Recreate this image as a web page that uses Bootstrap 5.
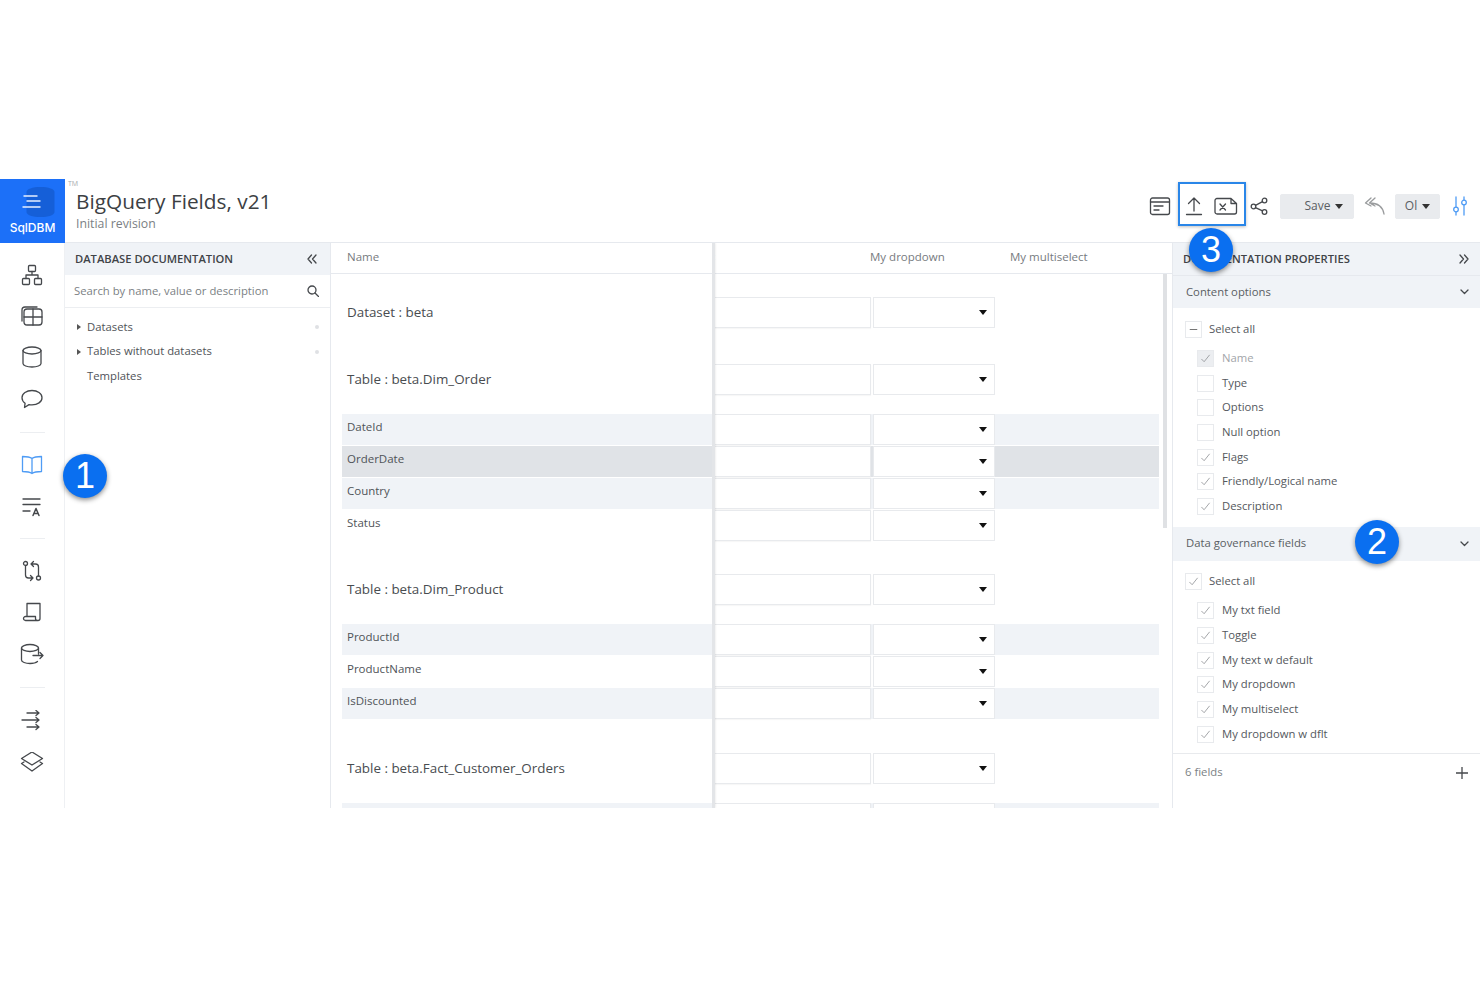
<!DOCTYPE html>
<html lang="en">
<head>
    <meta charset="UTF-8">
    <meta name="viewport" content="width=device-width, initial-scale=1.0">
    <title>SqlDBM - BigQuery Fields</title>
    <link href="https://cdn.jsdelivr.net/npm/bootstrap@5.3.0/dist/css/bootstrap.min.css" rel="stylesheet">
    <style>
        html, body { height: 100%; }
        body { font-family: "Open Sans", "Liberation Sans", sans-serif; background: #fff; color: #4a4f55; font-size: 12px; overflow: hidden; }
        .page-top { height: 179px; }
        .app-shell { height: 629px; position: relative; overflow: hidden; }
        svg { display: block; }
        .ico { fill: none; stroke: #45484c; stroke-width: 1.3; stroke-linecap: round; stroke-linejoin: round; }
        .ico-blue { stroke: #4f9cf5; }

        .top-bar { height: 64px; border-bottom: 1px solid #e6e9ee; }
        .logo-box { width: 65px; height: 64px; background: #1c70f8; color: #fff; font-family: Inter, sans-serif; font-size: 12px; font-weight: 500; }
        .logo-box svg { margin-top: 7px; }
        .logo-box span { line-height: 16px; }
        .tm-mark { font-size: 7px; color: #a6a9ad; margin: 1px 0 0 3px; line-height: 8px; width: 8px; }
        .doc-title { font-size: 20.8px; line-height: 28px; color: #3c4043; margin: 8px 0 0 0; font-weight: 400; }
        .doc-sub { font-size: 12.3px; line-height: 17px; color: #7b7f84; }
        .tool-zone { padding: 0 12px 9px 0; }
        .tool-ico { width: 33px; display: flex; justify-content: center; flex: none; }
        .form-ico { width: 36px; }
        .share-ico { width: 26px; }
        .export-box { border: 2px solid #2a86e8; width: 68px; height: 44px; box-shadow: 0 1px 3px rgba(0,0,0,.25); margin-bottom: 4px; padding-top: 4px; }
        .upload-ico { width: 27px; }
        .xfile-ico { width: 37px; }
        .gray-btn { --bs-btn-bg: #e9ebee; --bs-btn-border-color: #e9ebee; --bs-btn-color: #5a5e63; --bs-btn-font-size: 12px; --bs-btn-padding-y: 0; --bs-btn-padding-x: 0; --bs-btn-border-radius: 2px; height: 25px; }
        .save-btn { width: 74px; padding-left: 14px; margin: 0 10px 0 8px; }
        .user-btn { width: 45px; margin: 0 12px 0 10px; }
        .gray-btn.dropdown-toggle::after { border-top: 5px solid #333; border-left-width: 4.5px; border-right-width: 4.5px; margin-left: 5px; vertical-align: 1px; }

        .work-area { height: 565px; }
        .icon-rail { width: 65px; border-right: 1px solid #eef0f3; padding-top: 11px; }
        .rail-cell { height: 41.4px; }
        .rail-rule { width: 25px; height: 1px; background: #eceef1; margin: 12px 0; }
        .rail-rule.rule-tight { margin: 11px 0; }
        .rail-rule.rule-wide { margin: 12.500px 0; }

        .left-panel { width: 266px; border-right: 1px solid #e6e9ee; }
        .panel-head { height: 32px; background: #f0f3f7; font-size: 11.2px; font-weight: 600; color: #3f4347; padding: 0 11px 0 10px; }
        .left-panel .panel-head { padding-right: 13px; }
        .search-row { height: 33px; border-bottom: 1px solid #eceef1; padding: 0 11px 0 9px; color: #7b7f84; font-size: 11.3px; }
        .tree-list { padding-top: 7px; }
        .tree-item { height: 24.6px; font-size: 11.3px; color: #4f5358; padding: 0 11px 0 12px; }
        .tree-arrow { width: 0; height: 0; border-left: 4px solid #555; border-top: 3px solid transparent; border-bottom: 3px solid transparent; margin-right: 6px; }
        .tree-name { margin-left: 10px; }
        .tree-arrow + .tree-name { margin-left: 0; }
        .tree-dot { width: 4px; height: 4px; border-radius: 50%; background: #dfe1e4; margin-left: auto; }

        .main-panel { width: 842px; border-right: 1px solid #e6e9ee; position: relative; padding: 0 13px 0 11px; overflow: hidden; }
        .col-heads { height: 31px; margin: 0 -13px 0 -11px; padding: 0 13px 2px 11px; border-bottom: 1px solid #e6e9ee; color: #777b80; font-size: 11.5px; }
        .name-cell { width: 370px; padding-left: 5px; flex: none; }
        .input-cell { width: 159px; flex: none; padding-left: 2px; }
        .drop-cell { width: 124px; flex: none; padding-left: 2px; }
        .multi-cell { padding-left: 18px; }
        .col-tick { color: #c9d4e0; width: 156px; flex: none; font-size: 9px; padding-left: 1px; }
        .row-list { padding-top: 23px; }
        .doc-line { height: 31px; margin-bottom: 1px; }
        .doc-line.is-title { margin-bottom: 0; }
        .is-title { margin-top: 33px; font-size: 13.4px; color: #484c50; }
        .is-title + .is-title { margin-top: 36px; }
        .is-title:first-child { margin-top: 0; }
        .is-title.is-later { margin-top: 34px; }
        .is-title + .is-field { margin-top: 19px; }
        .is-field { background: #f0f3f7; font-size: 11.5px; color: #4f5358; }
        .is-plain { background: #fff; }
        .is-picked { background: #e0e3e7; }
        .is-field .name-cell { padding-bottom: 6px; }
        .cell-box.form-control { height: 31px; border: 1px solid #e8eaed; border-radius: 0; background: #fff; box-shadow: 0 1px 1px rgba(0,0,0,.03); padding: 0; }
        .cell-drop { height: 31px; border: 1px solid #e8eaed; background: #fff; padding-right: 7px; }
        .cell-caret { width: 0; height: 0; border-top: 5px solid #111; border-left: 4px solid transparent; border-right: 4px solid transparent; }
        .freeze-edge { position: absolute; left: 381px; top: 0; bottom: 0; width: 3px; background: #e3e5e8; box-shadow: 1px 0 2px rgba(0,0,0,.06); }
        .scroll-thumb { position: absolute; right: 5px; top: 31px; width: 4px; height: 254px; background: #dfe1e4; }

        .right-panel { width: 307px; }
        .opt-band { height: 34px; background: #f0f3f7; color: #5a5e63; font-size: 11.3px; padding: 0 11px 0 13px; }
        .opt-band.first-band { height: 33px; border-top: 1px solid #e6e9ee; margin-bottom: 7px; }
        .opt-row { height: 24.7px; font-size: 11.3px; color: #54585d; padding-left: 24px; }
        .opt-row.opt-all { height: 29px; padding-left: 12px; margin-bottom: 2px; }
        .opt-row.is-muted { color: #a2a5a9; }
        .opt-row .form-check-input { width: 17px; height: 17px; margin: 0 8px 0 0; border: 1px solid #e8eaed; border-radius: 0; background-color: #fff; flex: none; }
        .opt-all .form-check-input { margin-right: 7px; }
        .opt-row .form-check-input:checked { background-color: #fff; border-color: #e8eaed; background-size: 11px; background-image: url("data:image/svg+xml,%3csvg xmlns='http://www.w3.org/2000/svg' viewBox='0 0 12 12'%3e%3cpath fill='none' stroke='%23909397' stroke-width='.9' d='M1.500 6.500l3 3 6-7.500'/%3e%3c/svg%3e"); }
        .opt-row .form-check-input.is-locked:checked { background-color: #eceef1; }
        .opt-row .form-check-input.is-part { background-size: 9px; background-image: url("data:image/svg+xml,%3csvg xmlns='http://www.w3.org/2000/svg' viewBox='0 0 12 12'%3e%3cpath stroke='%23666' stroke-width='1.2' d='M1 6h10'/%3e%3c/svg%3e"); }
        .sec-gap { height: 8px; }
        .gov-list { padding-top: 6.500px; }
        .fields-foot { height: 38px; margin-top: 7px; border-top: 1px solid #e8eaed; padding: 0 12px 0 12px; color: #7b7f84; font-size: 11.3px; }

        .step-badge { position: absolute; width: 44px; height: 44px; border-radius: 50%; background: #0a6ff0; color: #fff; font-family: "Liberation Sans", sans-serif; font-size: 36px; line-height: 44px; text-align: center; box-shadow: 0 2px 5px rgba(0,0,0,.45); }
        .step-one { left: 63px; top: 275px; }
        .step-two { left: 1355px; top: 341px; }
        .step-three { left: 1189px; top: 49px; }
    </style>
</head>
<body>
    <div class="page-top"></div>
    <div class="app-shell">
        <!-- top bar -->
        <div class="top-bar d-flex">
            <div class="logo-box d-flex flex-column align-items-center">
                <svg width="48" height="34" viewBox="0 0 48 34">
                    <path d="M17.500 6c0-3 6-5 14-5s14 2 14 5v20c0 3-6 5-14 5s-14-2-14-5z" fill="#155fd8"/>
                    <path d="M14.500 10h14M17.500 15h14M13.500 21h18" stroke="#e6f0ff" stroke-width="1.600" fill="none"/>
                </svg>
                <span>SqlDBM</span>
            </div>
            <div class="tm-mark">TM</div>
            <div>
                <h1 class="doc-title">BigQuery Fields, v21</h1>
                <div class="doc-sub">Initial revision</div>
            </div>
            <div class="tool-zone ms-auto d-flex align-items-center">
                <div class="tool-ico form-ico"><svg class="ico" width="22" height="20" viewBox="0 0 22 20"><rect x="1.500" y="2" width="19" height="16.500" rx="2"/><path d="M1.500 6h19M5 10h9M5 14h5"/></svg></div>
                <div class="export-box d-flex align-items-center">
                    <div class="tool-ico upload-ico"><svg class="ico" width="18" height="20" viewBox="0 0 18 20"><path d="M9 15V2M3.500 7.500L9 2l5.500 5.500M1.500 18.500h15"/></svg></div>
                    <div class="tool-ico xfile-ico"><svg class="ico" width="24" height="18" viewBox="0 0 24 18"><path d="M3 1.500h14l5.500 5v8.500a2 2 0 0 1-2 2H3a2 2 0 0 1-2-2V3.500a2 2 0 0 1 2-2zM17 1.500v5h5.500"/><path d="M6 7l5.500 6M11.500 7L6 13"/></svg></div>
                </div>
                <div class="tool-ico share-ico"><svg class="ico" width="18" height="18" viewBox="0 0 18 18"><circle cx="14.500" cy="3.500" r="2.300"/><circle cx="3.500" cy="9.500" r="2.300"/><circle cx="14.500" cy="15" r="2.300"/><path d="M12.500 4.700L5.500 8.300M5.500 10.700l7 3.200"/></svg></div>
                <button type="button" class="btn gray-btn save-btn dropdown-toggle">Save</button>
                <svg class="ico" width="21" height="20" viewBox="0 0 21 20" stroke-opacity=".55"><path d="M7 2L1.500 7 7 10M11 2L5.500 7 11 10M5.500 7c7 0 13 2 14.500 11"/></svg>
                <button type="button" class="btn gray-btn user-btn dropdown-toggle">Ol</button>
                <svg class="ico ico-blue" width="16" height="20" viewBox="0 0 16 20"><path d="M4 1v10M4 16v3M12 1v3M12 9v10"/><circle cx="4" cy="13.500" r="2.300"/><circle cx="12" cy="6.500" r="2.300"/></svg>
            </div>
        </div>

        <div class="work-area d-flex">
            <!-- icon rail -->
            <div class="icon-rail d-flex flex-column align-items-center">
                <div class="rail-cell d-flex align-items-center"><svg class="ico" width="22" height="22" viewBox="0 0 22 22"><rect x="7.500" y="1.500" width="7" height="6" rx="1"/><rect x="1.500" y="14.500" width="7" height="6" rx="1"/><rect x="13.500" y="14.500" width="7" height="6" rx="1"/><path d="M11 7.500v3.500M5 14.500V11h12v3.500"/></svg></div>
                <div class="rail-cell d-flex align-items-center"><svg class="ico" width="22" height="20" viewBox="0 0 22 20"><rect x="3" y="3" width="18" height="16" rx="3"/><path d="M3 11h18M12 3v16M1 15V4a3 3 0 0 1 3-3h12"/></svg></div>
                <div class="rail-cell d-flex align-items-center"><svg class="ico" width="20" height="22" viewBox="0 0 20 22"><ellipse cx="10" cy="4.500" rx="9" ry="3.500"/><path d="M1 4.500v13c0 2 4 3.500 9 3.500s9-1.500 9-3.500v-13"/></svg></div>
                <div class="rail-cell d-flex align-items-center"><svg class="ico" width="22" height="20" viewBox="0 0 22 20"><path d="M11 1.500c5.500 0 10 3 10 7.200s-4.500 7.200-10 7.200c-1 0-2-.1-3-.3L3.500 18.500l.6-4.300C2.200 12.900 1 11 1 8.700 1 4.500 5.500 1.500 11 1.500z"/></svg></div>
                <div class="rail-rule"></div>
                <div class="rail-cell d-flex align-items-center"><svg class="ico ico-blue" width="22" height="20" viewBox="0 0 22 20"><path d="M11 3.500C9 2 5 1.500 1.500 1.500v15c3.500 0 7.500.5 9.500 2 2-1.500 6-2 9.500-2v-15C17 1.500 13 2 11 3.500zM11 3.500v15"/></svg></div>
                <div class="rail-cell d-flex align-items-center"><svg class="ico" width="20" height="20" viewBox="0 0 20 20"><path d="M1 2h17M1 7.500h17M1 14h7"/><path d="M11 18.500l3-7 3 7M12 16.500h4" stroke-width="1.500"/></svg></div>
                <div class="rail-rule rule-tight"></div>
                <div class="rail-cell d-flex align-items-center"><svg class="ico" width="20" height="22" viewBox="0 0 20 22"><circle cx="3.500" cy="3.500" r="2"/><circle cx="16.500" cy="18" r="2"/><path d="M3.500 5.500V15a3 3 0 0 0 3 3H11M8.500 15.500L11 18l-2.500 2.500M16.500 16V7a3 3 0 0 0-3-3H9M11.500 1.500L9 4l2.500 2.500"/></svg></div>
                <div class="rail-cell d-flex align-items-center"><svg class="ico" width="20" height="20" viewBox="0 0 20 20"><path d="M5 14.500V1.500h13v15a2 2 0 0 1-2 2H3.500a2 2 0 0 1-2-2 2 2 0 0 1 2-2h10v2a2 2 0 0 0 2 2"/></svg></div>
                <div class="rail-cell d-flex align-items-center"><svg class="ico" width="24" height="22" viewBox="0 0 24 22"><ellipse cx="10" cy="5" rx="8.500" ry="3.500"/><path d="M1.500 5v12c0 2 4 3.500 8.500 3.500 3 0 6-.7 7.500-2M18.500 5v6M13 12.500h10M20 9.500l3 3-3 3"/></svg></div>
                <div class="rail-rule rule-wide"></div>
                <div class="rail-cell d-flex align-items-center"><svg class="ico" width="22" height="22" viewBox="0 0 22 22"><path d="M6 3h12M15 .5L18 3l-3 2.500M1 10h17M15 7.500l3 2.500-3 2.500M6 17h12M15 14.500l3 2.500-3 2.500"/></svg></div>
                <div class="rail-cell d-flex align-items-center"><svg class="ico" width="24" height="22" viewBox="0 1.500 24 22"><path d="M12 1.500L22.500 8 12 14.500 1.500 8zM4 11.500L1.500 13 12 20.500 22.500 13 20 11.500"/></svg></div>
            </div>

            <!-- tree panel -->
            <div class="left-panel">
                <div class="panel-head d-flex align-items-center justify-content-between">
                    <span>DATABASE DOCUMENTATION</span>
                    <svg class="ico" width="10" height="10" viewBox="0 0 10 10"><path d="M4.500 1L1 5l3.500 4M9 1L5.500 5 9 9"/></svg>
                </div>
                <div class="search-row d-flex align-items-center justify-content-between">
                    <span>Search by name, value or description</span>
                    <svg class="ico" width="12" height="12" viewBox="0 0 12 12"><circle cx="5" cy="5" r="4"/><path d="M8 8l3.500 3.500"/></svg>
                </div>
                <div class="tree-list">
                    <div class="tree-item d-flex align-items-center"><span class="tree-arrow"></span><span class="tree-name">Datasets</span><span class="tree-dot"></span></div>
                    <div class="tree-item d-flex align-items-center"><span class="tree-arrow"></span><span class="tree-name">Tables without datasets</span><span class="tree-dot"></span></div>
                    <div class="tree-item d-flex align-items-center"><span class="tree-name">Templates</span></div>
                </div>
            </div>

            <!-- documentation grid -->
            <div class="main-panel">
                <div class="col-heads d-flex align-items-center">
                    <div class="name-cell">Name</div>
                    <div class="col-tick">:</div>
                    <div class="drop-cell">My dropdown</div>
                    <div class="multi-cell">My multiselect</div>
                </div>
                <div class="row-list" id="doc-rows"></div>
                <div class="freeze-edge"></div>
                <div class="scroll-thumb"></div>
            </div>

            <!-- properties panel -->
            <div class="right-panel">
                <div class="panel-head d-flex align-items-center justify-content-between">
                    <span>DOCUMENTATION PROPERTIES</span>
                    <svg class="ico" width="10" height="10" viewBox="0 0 10 10"><path d="M1 1l3.500 4L1 9M5.500 1L9 5 5.500 9"/></svg>
                </div>
                <div class="opt-band first-band d-flex align-items-center justify-content-between">
                    <span>Content options</span>
                    <svg class="ico" width="9" height="6" viewBox="0 0 9 6"><path d="M1 1l3.500 3.500L8 1"/></svg>
                </div>
                <div id="content-options"></div>
                <div class="sec-gap"></div>
                <div class="opt-band d-flex align-items-center justify-content-between">
                    <span>Data governance fields</span>
                    <svg class="ico" width="9" height="6" viewBox="0 0 9 6"><path d="M1 1l3.500 3.500L8 1"/></svg>
                </div>
                <div class="gov-list" id="governance-options"></div>
                <div class="fields-foot d-flex align-items-center justify-content-between">
                    <span>6 fields</span>
                    <svg class="ico" width="12" height="12" viewBox="0 0 12 12"><path d="M6 0v12M0 6h12"/></svg>
                </div>
            </div>
        </div>

        <div class="step-badge step-one">1</div>
        <div class="step-badge step-two">2</div>
        <div class="step-badge step-three">3</div>
    </div>

    <script>
        const docRows = [
            ['t', 'Dataset : beta'],
            ['t', 'Table : beta.Dim_Order'],
            ['f', 'DateId'], ['p', 'OrderDate'], ['f', 'Country'], ['w', 'Status'],
            ['t', 'Table : beta.Dim_Product'],
            ['f', 'ProductId'], ['w', 'ProductName'], ['f', 'IsDiscounted'],
            ['l', 'Table : beta.Fact_Customer_Orders'],
            ['f', '']
        ];
        const rowClass = { t: 'is-title', l: 'is-title is-later', f: 'is-field', p: 'is-field is-picked', w: 'is-field is-plain' };
        document.getElementById('doc-rows').innerHTML = docRows.map(([kind, name]) => `
            <div class="doc-line d-flex align-items-center ${rowClass[kind]}">
                <div class="name-cell">${name}</div>
                <div class="input-cell"><input type="text" class="form-control cell-box"></div>
                <div class="drop-cell"><div class="cell-drop d-flex align-items-center justify-content-end"><span class="cell-caret"></span></div></div>
            </div>`).join('');

        function optRow(label, state, isAll) {
            const attrs = state === 'on' || state === 'lock' ? 'checked' : '';
            const cls = state === 'lock' ? 'is-locked' : state === 'part' ? 'is-part' : '';
            return `<label class="opt-row d-flex align-items-center ${isAll ? 'opt-all' : ''} ${state === 'lock' ? 'is-muted' : ''}">
                <input class="form-check-input ${cls}" type="checkbox" ${attrs}><span>${label}</span></label>`;
        }
        document.getElementById('content-options').innerHTML = optRow('Select all', 'part', true) +
            [['Name', 'lock'], ['Type', 'off'], ['Options', 'off'], ['Null option', 'off'], ['Flags', 'on'], ['Friendly/Logical name', 'on'], ['Description', 'on']]
                .map(r => optRow(r[0], r[1])).join('');
        document.getElementById('governance-options').innerHTML = optRow('Select all', 'on', true) +
            ['My txt field', 'Toggle', 'My text w default', 'My dropdown', 'My multiselect', 'My dropdown w dflt']
                .map(l => optRow(l, 'on')).join('');
    </script>
    <script src="https://cdn.jsdelivr.net/npm/bootstrap@5.3.0/dist/js/bootstrap.bundle.min.js"></script>
</body>
</html>
